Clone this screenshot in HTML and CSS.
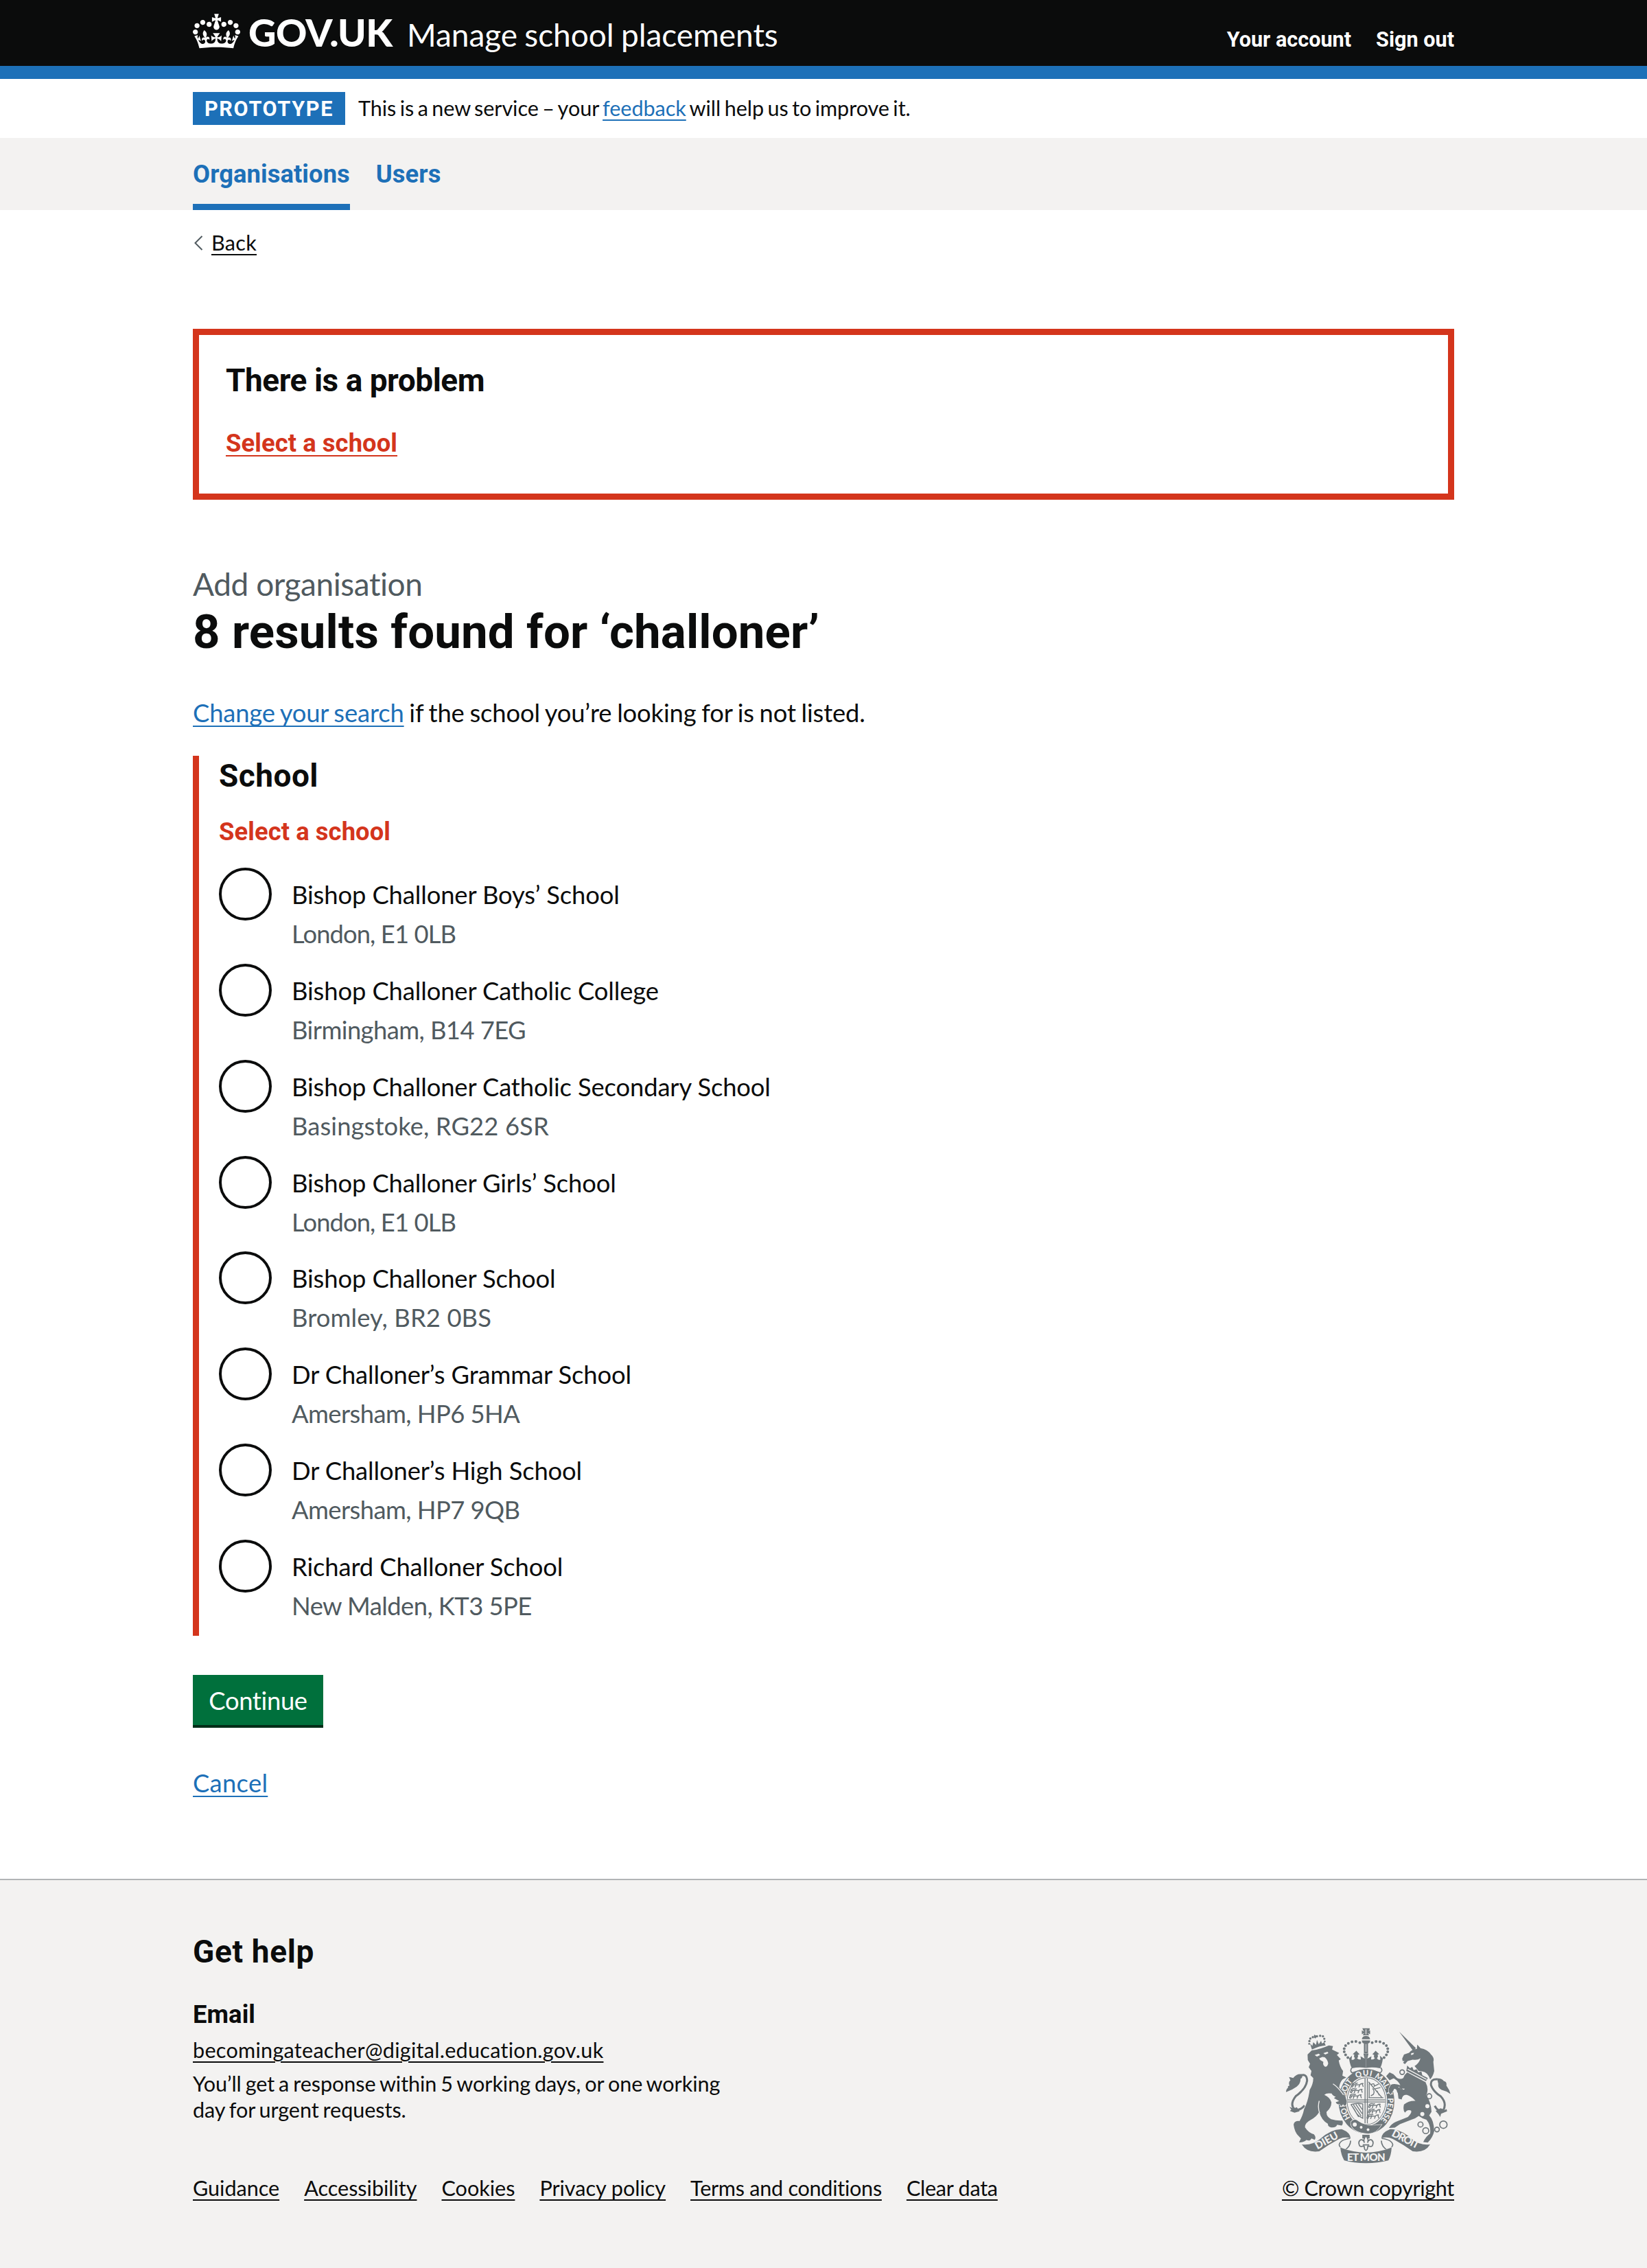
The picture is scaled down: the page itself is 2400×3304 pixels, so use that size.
FILE: index.html
```html
<!DOCTYPE html>
<html lang="en">
<head>
<meta charset="utf-8">
<title>8 results found for ‘challoner’ - Manage school placements</title>
<link rel="stylesheet" href="styles.css">
</head>
<body>
<header class="header">
  <div class="container header-row">
    <svg class="crown" viewBox="0 0 132 97" aria-hidden="true"><path fill="currentColor" fill-rule="evenodd" d="M25 30.2c3.5 1.5 7.7-.2 9.1-3.7 1.5-3.6-.2-7.8-3.9-9.2-3.6-1.4-7.6.3-9.1 3.9-1.4 3.5.3 7.5 3.9 9zM9 39.5c3.6 1.5 7.8-.2 9.2-3.7 1.5-3.6-.2-7.8-3.9-9.1-3.6-1.5-7.6.2-9.1 3.8-1.4 3.5.3 7.5 3.8 9zM4.4 57.2c3.5 1.5 7.7-.2 9.1-3.8 1.5-3.6-.2-7.7-3.9-9.1-3.5-1.5-7.6.3-9.1 3.8-1.4 3.5.3 7.6 3.9 9.1zm38.3-21.4c3.5 1.5 7.7-.2 9.1-3.8 1.5-3.6-.2-7.7-3.9-9.1-3.6-1.5-7.6.3-9.1 3.8-1.3 3.6.4 7.7 3.9 9.1zm64.4-5.6c-3.6 1.5-7.8-.2-9.1-3.7-1.5-3.6.2-7.8 3.8-9.2 3.6-1.4 7.7.3 9.2 3.9 1.3 3.5-.4 7.5-3.9 9zm15.9 9.3c-3.6 1.5-7.7-.2-9.1-3.7-1.5-3.6.2-7.8 3.7-9.1 3.6-1.5 7.7.2 9.2 3.8 1.5 3.5-.3 7.5-3.8 9zm4.7 17.7c-3.6 1.5-7.8-.2-9.2-3.8-1.5-3.6.2-7.7 3.9-9.1 3.6-1.5 7.7.3 9.2 3.8 1.3 3.5-.4 7.6-3.9 9.1zM89.3 35.8c-3.6 1.5-7.8-.2-9.2-3.8-1.4-3.6.2-7.7 3.9-9.1 3.6-1.5 7.7.3 9.2 3.8 1.4 3.6-.3 7.7-3.9 9.1zM69.7 17.7l8.9 4.7V9.3l-8.9 2.8c-.2-.3-.5-.6-.9-.9L72.4 0H59.6l3.5 11.2c-.3.3-.6.5-.9.9l-8.8-2.8v13.1l8.8-4.7c.3.3.6.7.9.9l-5 15.4v.1c-.2.8-.4 1.6-.4 2.4 0 4.1 3.1 7.5 7 8.1h.2c.3 0 .7.1 1 .1.4 0 .7 0 1-.1h.2c4-.6 7.1-4.1 7.1-8.1 0-.8-.1-1.7-.4-2.4V34l-5.1-15.4c.4-.2.7-.6 1-.9zM66 92.8c16.9 0 32.8 1.1 47.1 3.2 4-16.9 8.9-26.7 14-33.5l-9.6-3.4c1 4.9 1.1 7.2 0 10.2-1.5-1.4-3-4.3-4.2-8.7L108.6 76c2.8-2 5-3.2 7.5-3.3-4.4 9.4-10 11.9-13.6 11.2-4.3-.8-6.3-4.6-5.6-7.9 1-4.7 5.7-5.9 8-.5 4.3-8.7-3-11.4-7.6-8.8 7.1-7.2 7.9-13.5 2.1-21.1-8 6.1-8.1 12.3-4.5 20.8-4.7-5.4-12.1-2.5-9.5 6.2 3.4-5.2 7.9-2 7.2 3.1-.6 4.3-6.4 7.8-13.5 7.2-10.3-.9-10.9-8-11.2-13.8 2.5-.5 7.1 1.8 11 7.3L80.2 60c-4.1 4.4-8 5.3-12.3 5.4 1.4-4.4 8-11.6 8-11.6H55.5s6.4 7.2 7.9 11.6c-4.2-.1-8-1-12.3-5.4l1.4 16.4c3.9-5.5 8.5-7.7 10.9-7.3-.3 5.8-.9 12.8-11.1 13.8-7.2.6-12.9-2.9-13.5-7.2-.7-5 3.8-8.3 7.1-3.1 2.7-8.7-4.6-11.6-9.4-6.2 3.7-8.5 3.6-14.7-4.6-20.8-5.8 7.6-5 13.9 2.2 21.1-4.7-2.6-11.9.1-7.7 8.8 2.3-5.5 7.1-4.2 8.1.5.7 3.3-1.3 7.1-5.7 7.9-3.5.7-9-1.8-13.5-11.2 2.5.1 4.7 1.3 7.5 3.3l-4.7-15.4c-1.2 4.4-2.7 7.2-4.3 8.7-1.1-3-.9-5.3 0-10.2l-9.5 3.4c5 6.9 9.9 16.7 14 33.5 14.8-2.1 30.8-3.2 47.7-3.2z"/></svg>
    <span class="logo">GOV.UK</span>
    <span class="service">Manage school placements</span>
    <nav class="account">
      <a href="#">Your account</a>
      <a href="#">Sign out</a>
    </nav>
  </div>
</header>

<div class="container phase">
  <strong class="tag">PROTOTYPE</strong>
  <span class="phase-text">This is a new service – your <a class="link" href="#">feedback</a> will help us to improve it.</span>
</div>

<nav class="primary-nav">
  <div class="container nav-row">
    <a class="nav-item nav-item-current" href="#">Organisations</a>
    <a class="nav-item" href="#">Users</a>
  </div>
</nav>

<div class="container">
  <a class="back" href="#"><svg class="chevron" viewBox="0 0 14 22" aria-hidden="true"><path d="M12.5 1 2.5 11l10 10" fill="none" stroke="#505a5f" stroke-width="2"/></svg><span class="back-text">Back</span></a>

  <section class="error-summary">
    <h2 class="error-title">There is a problem</h2>
    <a class="error-link" href="#school">Select a school</a>
  </section>

  <main>
    <span class="caption">Add organisation</span>
    <h1 class="heading">8 results found for ‘challoner’</h1>
    <p class="intro"><a class="link intro-link" href="#">Change your search</a> if the school you’re looking for is not listed.</p>

    <fieldset class="group" id="school">
      <h2 class="legend">School</h2>
      <p class="error-message">Select a school</p>
      <div class="radio"><span class="dot"></span><div class="option"><p class="name">Bishop Challoner Boys’ School</p><p class="hint hint-tight">London, E1 0LB</p></div></div>
      <div class="radio"><span class="dot"></span><div class="option"><p class="name">Bishop Challoner Catholic College</p><p class="hint">Birmingham, B14 7EG</p></div></div>
      <div class="radio"><span class="dot"></span><div class="option"><p class="name">Bishop Challoner Catholic Secondary School</p><p class="hint hint-wide">Basingstoke, RG22 6SR</p></div></div>
      <div class="radio"><span class="dot"></span><div class="option"><p class="name">Bishop Challoner Girls’ School</p><p class="hint hint-tight">London, E1 0LB</p></div></div>
      <div class="radio"><span class="dot"></span><div class="option"><p class="name">Bishop Challoner School</p><p class="hint hint-wide">Bromley, BR2 0BS</p></div></div>
      <div class="radio"><span class="dot"></span><div class="option"><p class="name">Dr Challoner’s Grammar School</p><p class="hint">Amersham, HP6 5HA</p></div></div>
      <div class="radio"><span class="dot"></span><div class="option"><p class="name">Dr Challoner’s High School</p><p class="hint">Amersham, HP7 9QB</p></div></div>
      <div class="radio"><span class="dot"></span><div class="option"><p class="name">Richard Challoner School</p><p class="hint">New Malden, KT3 5PE</p></div></div>
    </fieldset>

    <button class="button" type="button">Continue</button>
    <p class="cancel"><a class="link" href="#">Cancel</a></p>
  </main>
</div>

<footer class="footer">
  <div class="container footer-row">
    <div class="footer-main">
      <h2 class="help">Get help</h2>
      <h3 class="email">Email</h3>
      <p class="mail"><a class="footer-link skip" href="#">becomingateacher@digital.education.gov.uk</a></p>
      <p class="response">You’ll get a response within 5 working days, or one working<br>day for urgent requests.</p>
      <div class="footer-links">
        <a class="footer-link" href="#">Guidance</a>
        <a class="footer-link" href="#">Accessibility</a>
        <a class="footer-link" href="#">Cookies</a>
        <a class="footer-link" href="#">Privacy policy</a>
        <a class="footer-link footer-link-tight" href="#">Terms and conditions</a>
        <a class="footer-link footer-link-tight" href="#">Clear data</a>
      </div>
    </div>
    <div class="crown-copyright">
      <svg class="crest" viewBox="100 70 725 596" aria-hidden="true">
        <defs>
          <path id="garter" d="M454 504A93 111 0 0 1 454 282A93 111 0 0 1 454 504"/>
          <g id="ribbon">
            <path class="d" d="M172 582Q215 588 250 560Q300 514 348 516Q383 530 385 555Q360 546 335 558Q290 582 248 612Q195 620 172 582Z"/>
            <path class="o" d="M383 556Q338 562 335 584Q338 600 360 606Q384 592 385 566"/>
          </g>
          <g id="halfcrown">
            <g class="d"><circle cx="425" cy="138" r="6"/><circle cx="408" cy="133" r="6"/><circle cx="391" cy="134" r="6"/><circle cx="375" cy="141" r="6"/><circle cx="363" cy="151" r="6"/><circle cx="357" cy="164" r="6"/><circle cx="357" cy="178" r="6"/><circle cx="363" cy="191" r="6"/><circle cx="373" cy="203" r="6"/></g>
            <path class="d" d="M378 207L391 195L389 212Q398 216 404 206Q397 198 401 190L394 188Q401 182 410 173Q418 183 424 188L416 192Q420 200 413 206Q422 214 430 211L428 197L446 208L441 186H452V248Q420 243 391 250Q383 238 378 207Z"/>
          </g>
          <g id="passant"><path class="s" d="M-27 8Q-30-3-18-3L8-2Q16-10 25-7M-18-2L-24 9M-8-1L-12 10M9-2L5 9M20-6L24 7M-27-5Q-15-14-7-8L0-10"/></g>
        </defs>
        <path class="o" d="M390 248Q380 262 392 270Q452 245 514 270Q528 260 516 247"/>
        <path class="d" d="M436 75H468V82L462 88L470 84V101L460 96L466 106H438L444 96L434 101V84L443 90ZM434 123Q436 108 452 109Q468 108 470 123ZM434 128H470Q470 141 461 141V185H443V141Q434 140 434 128Z"/>
        <path class="l" d="M449 143H455V178H449ZM448 80H456V102H448Z" opacity=".5"/>
        <use href="#halfcrown"/><use href="#halfcrown" transform="matrix(-1 0 0 1 904 0)"/>

        <ellipse class="d" cx="454" cy="394" rx="122" ry="141"/>
        <ellipse class="ol" cx="454" cy="393" rx="88" ry="106"/>
        <ellipse class="l" cx="454" cy="393" rx="83" ry="101"/>
        <path class="s" d="M448 294V490M458 294V490M372 388H536M372 397H536"/>
        <use href="#passant" x="416" y="324"/><use href="#passant" x="412" y="349"/><use href="#passant" x="408" y="373"/>
        <use href="#passant" x="491" y="414"/><use href="#passant" x="490" y="438"/><use href="#passant" x="484" y="461"/>
        <path class="s" d="M463 309L522 378M463 378H528M472 322Q490 310 488 328L508 318M481 338Q492 349 484 364L473 370M490 340L515 334M500 348L510 368M466 316V380"/>
        <path class="s" d="M386 408Q410 400 438 405V468Q414 458 404 434Q396 420 386 408M397 409L431 458M408 407L435 448M419 406L436 430M391 414L420 462"/>
        <g class="motto">
          <text><textPath href="#garter" startOffset="82" textLength="64">HO I</textPath></text>
          <text><textPath href="#garter" startOffset="182" textLength="72">SOIT</textPath></text>
          <text><textPath href="#garter" startOffset="276" textLength="67">QUI</textPath></text>
          <text><textPath href="#garter" startOffset="356" textLength="72">MAL</textPath></text>
          <text><textPath href="#garter" startOffset="436">Y</textPath></text>
          <text><textPath href="#garter" startOffset="468" textLength="104">PENSE</textPath></text>
        </g>
        <path class="de" d="M386 484Q402 464 420 482Q450 502 490 499L520 496Q500 532 462 535Q425 533 402 518Q384 504 386 484Z"/>
        <circle class="l" cx="403" cy="495" r="9"/><circle class="l" cx="431" cy="507" r="6"/><circle class="l" cx="461" cy="518" r="6"/>
        <path class="d" d="M436 540H468V556H436Z"/>
        <path class="o" d="M452 545Q465 558 459 575Q462 560 476 562Q488 572 480 588Q474 594 468 590L460 590L458 602Q452 614 446 602L444 590L436 590Q430 594 424 588Q416 572 428 562Q442 560 445 575Q439 558 452 545ZM438 584H466"/>

        <g class="lion">
          <path class="t" d="M160 284Q194 268 195 304Q190 340 145 372Q118 408 140 428Q162 438 184 412"/>
          <path class="d" d="M172 276Q178 292 166 296Q168 314 150 330Q130 345 103 354Q103 340 112 334Q108 328 118 325Q112 310 122 302L116 288Q128 290 134 292Q150 272 172 276ZM118 418L136 426L150 420L162 438L140 444L120 436L126 430Z"/>
          <path class="de" d="M197 190L215 172Q255 166 290 150L308 153L304 168L335 183L325 192L342 210L333 216Q338 245 352 262L349 282L366 290L350 298Q337 312 335 335L352 350Q362 370 368 392Q369 412 358 414L352 406L344 416L338 406Q325 410 320 398L335 393L312 380L320 374Q306 370 302 360Q280 356 270 366Q294 376 301 398Q302 420 280 440Q278 460 300 472Q325 480 349 478Q354 492 346 500L326 496Q322 510 300 508Q284 504 286 492Q258 478 248 440Q236 462 212 474Q184 488 186 508Q202 532 225 538Q236 552 228 562L214 556Q208 570 192 563Q180 574 160 573L168 556L160 548Q140 530 136 495Q140 478 162 480Q175 460 182 428Q200 392 206 345Q222 318 222 292L210 280L214 262L202 245L208 230L198 214Z"/>
          <path class="l" d="M228 192L246 186L252 192L238 199ZM266 184L284 178L288 184L274 190ZM248 206L262 200L272 202Q286 214 287 230Q282 246 272 242Q262 234 266 222L252 214Z"/>
          <path class="wl" d="M308 318Q330 332 354 366M248 392Q240 420 250 446"/>
          <g class="d"><circle cx="205" cy="131" r="5"/><circle cx="209" cy="120" r="5"/><circle cx="220" cy="114" r="5"/><circle cx="238" cy="110" r="5"/><circle cx="252" cy="108" r="5"/><circle cx="264" cy="110" r="5"/><circle cx="270" cy="121" r="5"/><circle cx="204" cy="143" r="4"/><circle cx="272" cy="133" r="4"/>
          <path d="M226 103L237 109L232 120L224 115ZM208 142L218 152L222 136L234 148L238 126L246 145L256 130L260 142L270 136L276 150Q248 152 216 168Z"/></g>
        </g>

        <g class="unicorn">
          <path class="t" d="M764 298Q732 296 736 324Q746 352 778 372Q806 402 790 432Q770 446 752 414"/>
          <path class="d" d="M762 294Q782 292 792 306Q806 308 803 325L815 345L821 362Q800 348 782 344Q764 334 768 318ZM756 436L778 424L796 432L804 428L806 438L780 448L776 462L768 450Z"/>
          <path class="d" d="M597 90L670 162L658 174Z"/>
          <path class="d" d="M610 208L618 190L640 182Q654 166 674 166L676 146L690 162Q722 168 736 190Q752 204 746 222L750 262Q744 288 732 298L726 284Q714 262 682 262L664 240Q684 228 690 206Q676 216 656 212L634 218L622 232L614 226L620 218L612 218Z"/>
          <path class="l" d="M650 184L662 182L658 190L648 192Z"/>
          <path class="d" d="M632 238L644 250L654 244L660 258L674 254L680 268L694 264L698 280L722 292L714 306L628 262Z"/>
          <path class="wl" d="M634 254L716 298"/>
          <path class="de" d="M632 268L712 310Q728 340 715 368Q736 396 738 440L728 456Q748 476 750 524Q744 552 722 574L702 572Q714 546 732 535Q736 498 716 474Q698 470 682 458Q668 470 650 474L600 494L578 509L552 510Q564 490 590 480L635 462Q655 442 648 434Q632 428 622 444Q612 430 618 408Q640 390 668 392Q650 372 630 366Q612 362 608 386L594 382L590 350Q575 332 572 346L560 364Q542 350 560 322Q575 314 602 324Q592 302 572 294L555 302L540 284L555 268L572 276L588 292Q604 300 615 292Q620 278 632 268Z"/>
          <path class="wl" d="M594 332Q608 344 620 340"/>
          <g class="ring"><circle cx="610" cy="267" r="10"/><circle cx="600" cy="347" r="11"/><circle cx="728" cy="372" r="11"/><circle cx="690" cy="495" r="11"/><circle cx="713" cy="522" r="13"/><circle cx="762" cy="517" r="10"/><circle cx="790" cy="496" r="16"/></g>
          <circle class="l" cx="720" cy="415" r="9"/><circle class="l" cx="698" cy="450" r="9"/>
        </g>

        <use href="#ribbon"/><use href="#ribbon" transform="matrix(-1 0 0 1 904 0)"/>
        <path class="de" d="M340 596Q395 617 452 618Q510 617 564 596Q562 630 550 652Q505 664 452 664Q398 664 357 652Q343 628 340 596Z"/>
        <g class="motto motto-large">
          <text x="370" y="655" textLength="166">ET MON</text>
          <text transform="translate(240 605) rotate(-29)" textLength="108">DIEU</text>
          <text transform="translate(561 544) rotate(27)" textLength="128">DROIT</text>
        </g>
      </svg>
      <a class="footer-link copyright" href="#">© Crown copyright</a>
    </div>
  </div>
</footer>
</body>
</html>
```
FILE: styles.css
```css
* { box-sizing: border-box; }

body {
  margin: 0;
  background: #fff;
  color: #0b0c0c;
  font-family: Lato, "Liberation Sans", sans-serif;
  font-size: 36.4px;
  line-height: 48px;
  text-decoration-skip-ink: none;
}

h1, h2, h3, p { margin: 0; }

h1, h2, h3, .tag, .account, .nav-item, .error-link, .error-message {
  font-family: Roboto, "Liberation Sans", sans-serif;
  font-weight: 700;
}

.container { width: 1838px; margin: 0 auto; }

.link {
  color: #1d70b8;
  text-decoration: underline 2px;
  text-underline-offset: 5px;
}

/* Header */
.header {
  height: 115px;
  background: #0b0c0c;
  border-bottom: 19px solid #1d70b8;
  color: #fff;
}
.header-row { display: flex; align-items: flex-start; }
.crown { width: 69px; height: 51px; margin-top: 20px; flex: none; }
.logo {
  margin: 17px 0 0 12px;
  width: 231px;
  font-size: 56px;
  font-weight: 900;
  line-height: 60px;
  letter-spacing: -0.011em;
}
.service {
  margin-top: 22px;
  font-size: 46px;
  line-height: 57px;
  letter-spacing: -0.001em;
  word-spacing: -0.03em;
}
.account {
  display: flex;
  gap: 36px;
  margin: 39px 0 0 auto;
  font-size: 30.6px;
  line-height: 38px;
}
.account a { color: #fff; text-decoration: none; }

/* Phase banner */
.phase { display: flex; align-items: flex-start; gap: 19px; height: 86px; padding-top: 19px; }
.tag {
  width: 222px;
  height: 48px;
  padding-top: 1px;
  background: #1d70b8;
  color: #fff;
  font-size: 30.6px;
  letter-spacing: 0.054em;
  text-align: center;
}
.phase-text {
  margin-top: 5px;
  font-size: 30.6px;
  line-height: 38px;
  letter-spacing: -0.002em;
  word-spacing: -0.075em;
}

/* Primary navigation */
.primary-nav { background: #f3f2f1; }
.nav-row { display: flex; gap: 38px; }
.nav-item {
  height: 105px;
  padding-top: 29px;
  color: #1d70b8;
  letter-spacing: 0.0015em;
  text-decoration: none;
}
.nav-item-current { border-bottom: 9px solid #1d70b8; }

.back {
  display: flex;
  align-items: center;
  gap: 12px;
  margin-top: 29px;
  color: #0b0c0c;
  font-size: 30.6px;
  line-height: 38px;
  letter-spacing: 0.009em;
  text-decoration: none;
}
.chevron { width: 14px; height: 22px; margin-left: 1px; }
.back-text { text-decoration: underline 2px; text-underline-offset: 5px; }

/* Error summary */
.error-summary {
  height: 249px;
  margin-top: 106px;
  padding: 38px 39px;
  border: 9px solid #d4351c;
}
.error-title { font-size: 46px; line-height: 57px; letter-spacing: -0.0106em; }
.error-link {
  display: inline-block;
  margin-top: 39px;
  color: #d4351c;
  letter-spacing: 0.002em;
  text-decoration: underline 2px;
  text-underline-offset: 5px;
}

/* Results */
.caption {
  display: block;
  margin-top: 94px;
  color: #505a5f;
  font-size: 46px;
  line-height: 57px;
  letter-spacing: -0.0095em;
}
.heading { margin-top: 3px; font-size: 69px; line-height: 77px; letter-spacing: 0.002em; }
.intro { margin-top: 55px; letter-spacing: -0.004em; word-spacing: -0.04em; }
.intro-link { letter-spacing: -0.0045em; }

.group {
  min-width: 0;
  margin: 39px 0 0;
  padding: 0 0 0 29px;
  border: 0;
  border-left: 9px solid #d4351c;
}
.legend { padding-top: 3px; font-size: 46px; line-height: 52px; letter-spacing: 0.0103em; }
.error-message {
  margin: 32px 0 28px;
  color: #d4351c;
  letter-spacing: 0.002em;
}
.radio { display: flex; gap: 29px; height: 139.86px; }
.dot {
  flex: none;
  width: 77px;
  height: 77px;
  border: 4px solid #0b0c0c;
  border-radius: 50%;
}
.option { padding-top: 15px; }
.name { letter-spacing: -0.0035em; }
.hint { margin-top: 9px; color: #505a5f; letter-spacing: -0.016em; }
.hint-tight { letter-spacing: -0.0254em; }
.hint-wide { letter-spacing: 0.0025em; }

.button {
  display: block;
  width: 190px;
  height: 77px;
  margin-top: 57px;
  padding: 9px 0 8px;
  border: 0;
  border-bottom: 4px solid #002d18;
  background: #00703c;
  color: #fff;
  font: inherit;
  letter-spacing: -0.0098em;
}
.cancel { margin-top: 56px; letter-spacing: 0.008em; }

/* Footer */
.footer {
  height: 567px;
  margin-top: 116px;
  padding-top: 76px;
  border-top: 2px solid #b1b4b6;
  background: #f3f2f1;
  font-size: 30.6px;
  line-height: 38px;
}
.footer-row { display: flex; justify-content: space-between; align-items: flex-end; }
.help { font-size: 46px; line-height: 57px; letter-spacing: 0.014em; }
.email { margin-top: 39px; font-size: 36.4px; line-height: 48px; letter-spacing: 0.0015em; }
.mail { margin-top: 9px; letter-spacing: 0.0086em; }
.response { margin-top: 11px; letter-spacing: -0.002em; word-spacing: -0.06em; }
.footer-links { display: flex; gap: 36px; margin-top: 76px; letter-spacing: -0.001em; }
.footer-link {
  color: #0b0c0c;
  text-decoration: underline 2px;
  text-underline-offset: 5px;
}
.footer-link-tight { letter-spacing: -0.009em; }
.skip { text-decoration-skip-ink: auto; }
.crown-copyright { display: flex; flex-direction: column; align-items: center; }
.copyright { letter-spacing: -0.0107em; }

.crest { width: 242px; height: 199px; margin: 0 0 17px 2px; }
.crest .d { fill: #6f777b; }
.crest .l { fill: #f3f2f1; }
.crest .de { fill: #6f777b; stroke: #f3f2f1; stroke-width: 4; paint-order: stroke; }
.crest .o { fill: #f3f2f1; stroke: #6f777b; stroke-width: 5; }
.crest .ol { fill: none; stroke: #f3f2f1; stroke-width: 5; }
.crest .s { fill: none; stroke: #6f777b; stroke-width: 4; }
.crest .t { fill: none; stroke: #6f777b; stroke-width: 9; }
.crest .wl { fill: none; stroke: #f3f2f1; stroke-width: 4; }
.crest .ring { fill: none; stroke: #6f777b; stroke-width: 5; }
.motto { fill: #f3f2f1; font-weight: 900; font-size: 34px; letter-spacing: 0; }
.motto-large { font-size: 45px; }
```
